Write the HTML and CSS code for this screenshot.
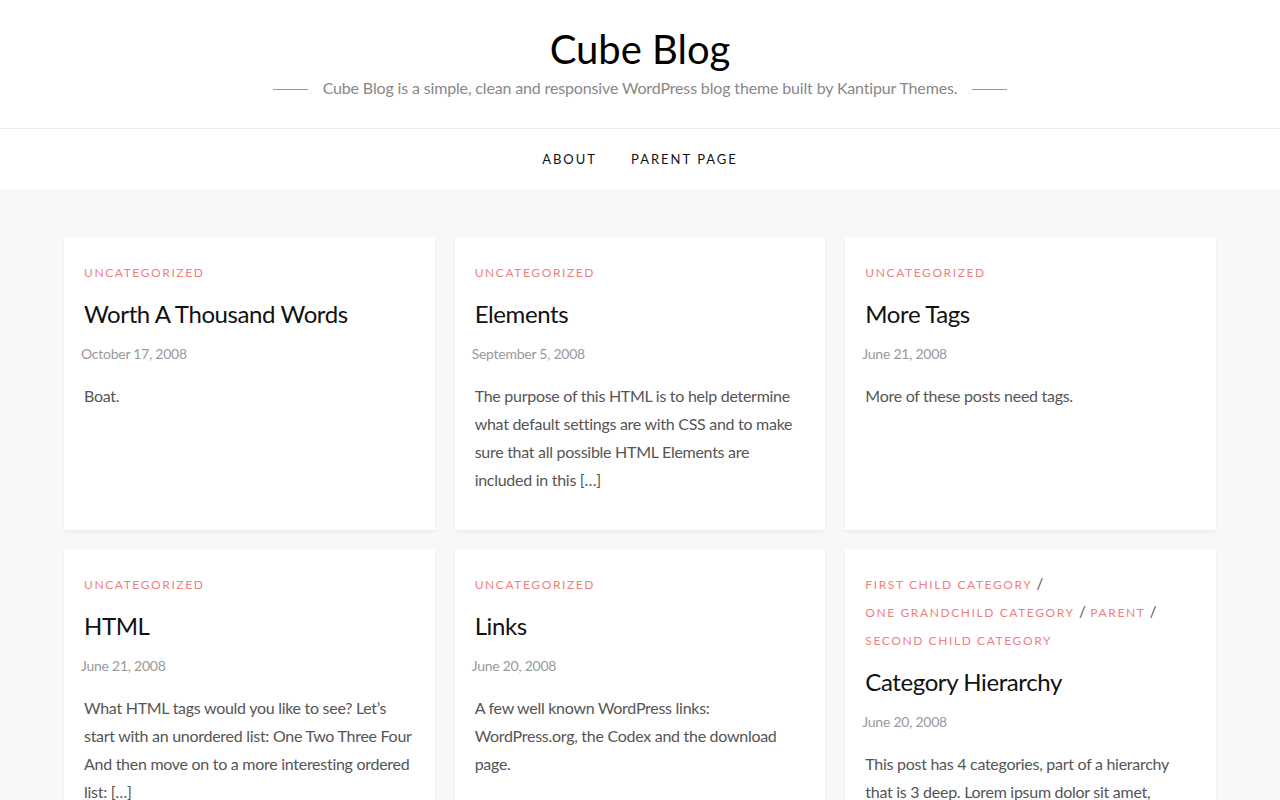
FILE: index.html
```html
<!DOCTYPE html>
<html lang="en">
<head>
<meta charset="utf-8">
<title>Cube Blog</title>
<link rel="stylesheet" href="styles.css">
</head>
<body>
<header class="site-header">
  <h1 class="site-title">Cube Blog</h1>
  <div class="tagline-row">
    <span class="dash"></span>
    <p class="tagline">Cube Blog is a simple, clean and responsive WordPress blog theme built by Kantipur Themes.</p>
    <span class="dash"></span>
  </div>
</header>
<nav class="main-nav">
  <a href="#">About</a>
  <a href="#">Parent Page</a>
</nav>
<main class="content">
  <div class="grid">
    <article class="card">
      <div class="cats"><a href="#">Uncategorized</a></div>
      <h2 class="title">Worth A Thousand Words</h2>
      <div class="date">October 17, 2008</div>
      <p class="excerpt">Boat.</p>
    </article>
    <article class="card">
      <div class="cats"><a href="#">Uncategorized</a></div>
      <h2 class="title">Elements</h2>
      <div class="date">September 5, 2008</div>
      <p class="excerpt">The purpose of this HTML is to help determine what default settings are with CSS and to make sure that all possible HTML Elements are included in this […]</p>
    </article>
    <article class="card">
      <div class="cats"><a href="#">Uncategorized</a></div>
      <h2 class="title">More Tags</h2>
      <div class="date">June 21, 2008</div>
      <p class="excerpt">More of these posts need tags.</p>
    </article>
    <article class="card">
      <div class="cats"><a href="#">Uncategorized</a></div>
      <h2 class="title">HTML</h2>
      <div class="date">June 21, 2008</div>
      <p class="excerpt">What HTML tags would you like to see? Let’s start with an unordered list: One Two Three Four And then move on to a more interesting ordered list: […]</p>
    </article>
    <article class="card">
      <div class="cats"><a href="#">Uncategorized</a></div>
      <h2 class="title">Links</h2>
      <div class="date">June 20, 2008</div>
      <p class="excerpt">A few well known WordPress links: WordPress.org, the Codex and the download page.</p>
    </article>
    <article class="card">
      <div class="cats"><a href="#">First Child Category</a> <span class="sep">/</span> <a href="#">One Grandchild Category</a> <span class="sep">/</span> <a href="#">Parent</a> <span class="sep">/</span> <a href="#">Second Child Category</a></div>
      <h2 class="title">Category Hierarchy</h2>
      <div class="date">June 20, 2008</div>
      <p class="excerpt">This post has 4 categories, part of a hierarchy that is 3 deep. Lorem ipsum dolor sit amet, consectetur adipiscing elit.</p>
    </article>
  </div>
</main>
</body>
</html>
```
FILE: styles.css
```css
* { box-sizing: border-box; }
html, body { margin: 0; padding: 0; }
body {
  background: #f8f8f8;
  font-family: "Lato", "Open Sans", sans-serif;
  color: #555;
}
a { text-decoration: none; color: inherit; }

.site-header {
  background: #fff;
  text-align: center;
  padding: 24px 0 28px;
  border-bottom: 1px solid #ececec;
}
.site-title {
  margin: 0;
  font-size: 40px;
  line-height: 50px;
  font-weight: 400;
  color: #000;
}
.tagline-row {
  margin-top: 2px;
  display: flex;
  justify-content: center;
  align-items: center;
  gap: 15px;
}
.tagline {
  margin: 0;
  font-size: 16px;
  line-height: 24px;
  letter-spacing: -0.15px;
  color: #888;
}
.dash {
  width: 35px;
  height: 1px;
  background: #999;
  margin-top: 3px;
}

.main-nav {
  background: #fff;
  height: 60px;
  display: flex;
  justify-content: center;
  align-items: center;
  gap: 34px;
}
.main-nav a {
  font-size: 13px;
  text-transform: uppercase;
  letter-spacing: 2px;
  color: #111;
}

.content {
  padding: 49px 64px 0;
}
.grid {
  display: grid;
  grid-template-columns: repeat(3, 1fr);
  gap: 20px;
}
.card {
  background: #fff;
  padding: 21px 20px 36px;
  box-shadow: 0 2px 3px rgba(0, 0, 0, 0.05);
}
.cats {
  font-size: 12px;
  line-height: 28px;
  letter-spacing: 1.6px;
  text-transform: uppercase;
}
.cats a {
  color: #f07f7f;
  white-space: nowrap;
}
.cats .sep {
  color: #555;
  font-size: 15px;
  line-height: 1;
  letter-spacing: 0;
}
.title {
  margin: 11px 0 0;
  font-size: 24px;
  line-height: 31px;
  font-weight: 400;
  letter-spacing: -0.4px;
  color: #111;
}
.date {
  margin: 15px 0 0 -3px;
  font-size: 14px;
  line-height: 20px;
  letter-spacing: -0.25px;
  color: #999;
}
.excerpt {
  margin: 18px 0 0;
  font-size: 16px;
  line-height: 28px;
  letter-spacing: -0.28px;
  color: #555;
}
```
